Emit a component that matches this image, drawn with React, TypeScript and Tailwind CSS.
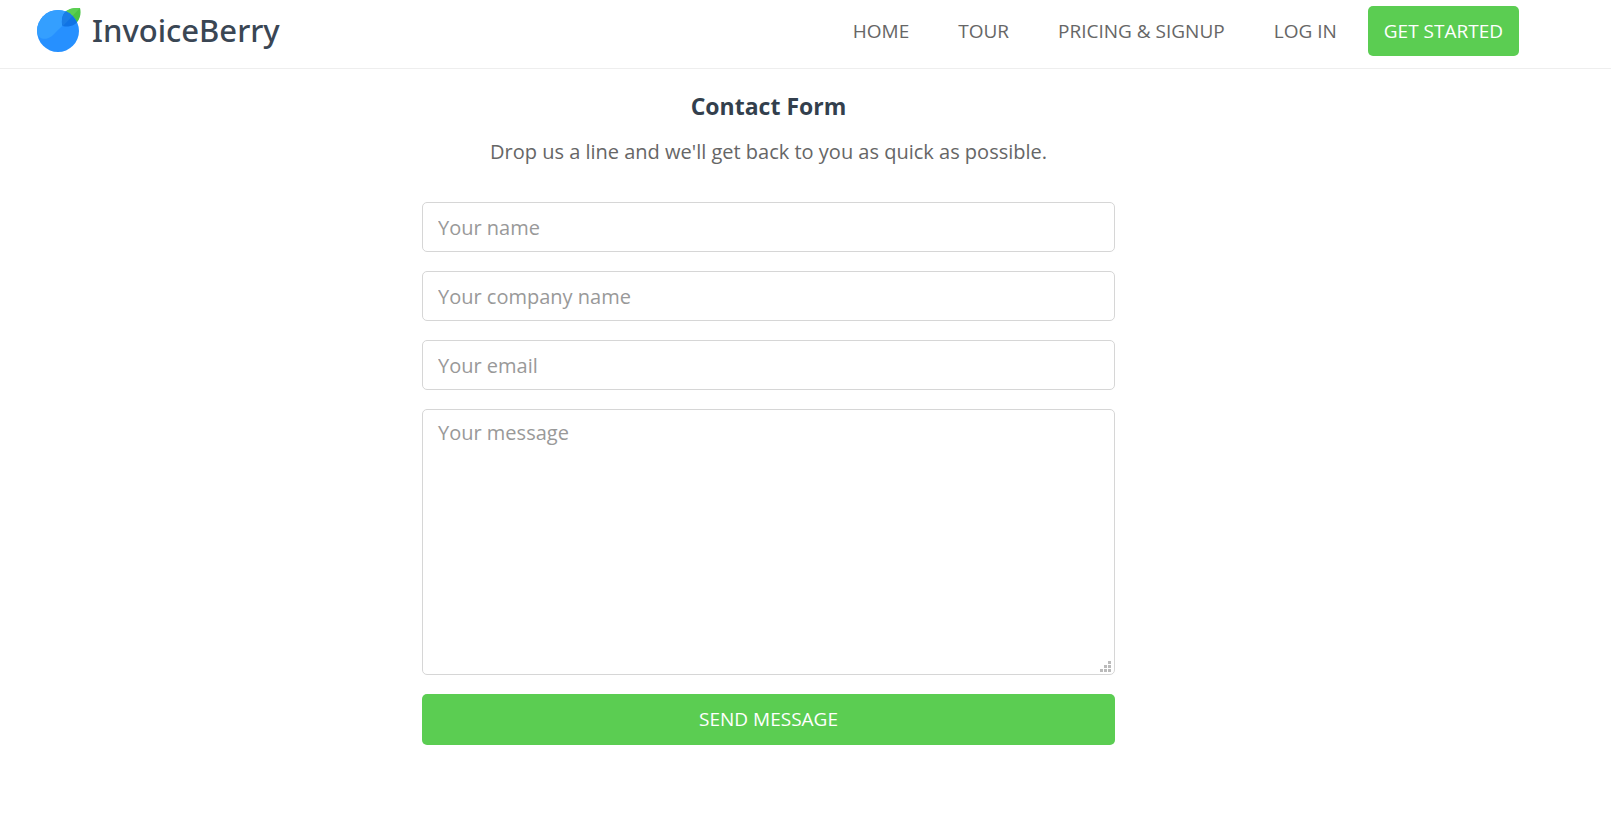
import React, { useState } from "react";

const navLinks = [
  { label: "HOME", href: "#home" },
  { label: "TOUR", href: "#tour" },
  { label: "PRICING & SIGNUP", href: "#pricing" },
  { label: "LOG IN", href: "#login" },
];

const fields = [
  { id: "name", type: "text", placeholder: "Your name" },
  { id: "company", type: "text", placeholder: "Your company name" },
  { id: "email", type: "email", placeholder: "Your email" },
];

const Logo = () => (
  <svg width="44" height="46" viewBox="0 0 44 46" aria-hidden="true">
    <defs>
      <clipPath id="berry">
        <circle cx="21" cy="24" r="21" />
      </clipPath>
    </defs>
    <path d="M25 17C24 5 31 0 43 1C45 8 42 20 28 19.500Q25 19.500 25 17Z" fill="#4bc444" />
    <path d="M25 17C24 5 31 0 43 1L26 19Z" fill="#5bcf52" />
    <circle cx="21" cy="24" r="21" fill="#2690ff" />
    <g clipPath="url(#berry)">
      <path d="M0 26C2 32 8 34 15 29C23 21 31 13 44 2L20 0L0 4Z" fill="#349fff" />
      <path d="M25 17C24 5 31 0 43 1C45 8 42 20 28 19.500Q25 19.500 25 17Z" fill="#1073e4" />
      <path d="M25 17C24 5 31 0 43 1L26 19Z" fill="#1a7de6" />
    </g>
  </svg>
);

const Header = () => (
  <header className="flex h-[69px] items-start justify-between border-b border-[#eeeeee] pr-[92px] pl-[37px]">
    <a href="#home" className="flex items-center gap-[11px] pt-1.5">
      <Logo />
      <span className="font-['Noto_Sans',sans-serif] text-[31px] leading-[48px] font-medium text-[#3a4654]">
        InvoiceBerry
      </span>
    </a>
    <nav className="flex items-center pt-1.5">
      <ul className="flex gap-[49px] pr-[31px]">
        {navLinks.map((link) => (
          <li key={link.label}>
            <a href={link.href} className="text-[19px] leading-[50px] text-[#666666]">
              {link.label}
            </a>
          </li>
        ))}
      </ul>
      <a
        href="#signup"
        className="rounded-[5px] bg-[#5bcd52] px-4 text-[19px] leading-[50px] text-white"
      >
        GET STARTED
      </a>
    </nav>
  </header>
);

const inputClass =
  "block w-full rounded-[5px] border border-[#d6d6d6] bg-white px-[15px] text-[20px] text-[#666666] outline-none placeholder:text-[#999999] focus:border-[#5bcd52]";

const ContactForm = () => {
  const [values, setValues] = useState<Record<string, string>>({});

  const handleChange = (id: string, value: string) => {
    setValues({ ...values, [id]: value });
  };

  const handleSubmit = (e: React.FormEvent) => {
    e.preventDefault();
    setValues({});
  };

  return (
    <form onSubmit={handleSubmit} className="flex flex-col gap-[19px]">
      {fields.map((field) => (
        <input
          key={field.id}
          id={field.id}
          type={field.type}
          aria-label={field.placeholder}
          placeholder={field.placeholder}
          value={values[field.id] || ""}
          onChange={(e) => handleChange(field.id, e.target.value)}
          className={`${inputClass} h-[50px]`}
        />
      ))}
      <div className="relative">
        <textarea
          id="message"
          aria-label="Your message"
          placeholder="Your message"
          value={values.message || ""}
          onChange={(e) => handleChange("message", e.target.value)}
          className={`${inputClass} h-[266px] resize-none py-[9px] leading-7`}
        />
        <svg
          width="11"
          height="11"
          viewBox="0 0 11 11"
          fill="#bbbbbb"
          className="pointer-events-none absolute right-1 bottom-[3px]"
          aria-hidden="true"
        >
          <path d="M8 0h3v3h-3zM4 4h3v3h-3zM8 4h3v3h-3zM0 8h3v3h-3zM4 8h3v3h-3zM8 8h3v3h-3z" />
        </svg>
      </div>
      <button
        type="submit"
        className="w-full cursor-pointer rounded-[5px] bg-[#5bcd52] text-[19px] leading-[51px] text-white"
      >
        SEND MESSAGE
      </button>
    </form>
  );
};

const App = () => {
  return (
    <div className="min-h-screen bg-white font-['Open_Sans',sans-serif] text-[#666666]">
      <Header />
      <main className="pt-[21px] pr-[74px] pb-20">
        <div className="mx-auto w-full max-w-[693px]">
          <h1 className="text-center text-[23px] leading-8 font-bold text-[#333f4d]">
            Contact Form
          </h1>
          <p className="mt-3.5 mb-[34px] text-center text-[20px] leading-8">
            Drop us a line and we'll get back to you as quick as possible.
          </p>
          <ContactForm />
        </div>
      </main>
    </div>
  );
};

export default App;
